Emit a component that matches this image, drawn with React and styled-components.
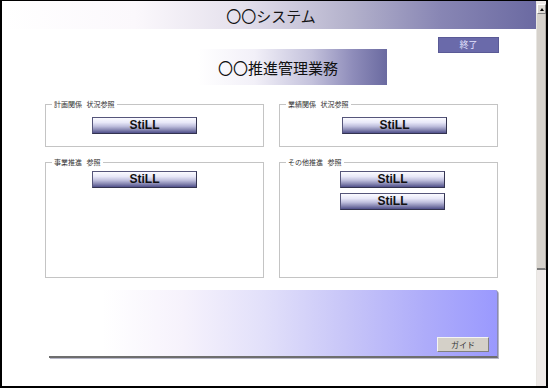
import React from "react";
import styled, { createGlobalStyle } from "styled-components";

const Global = createGlobalStyle`
  html, body { margin: 0; padding: 0; background: #fff; }
  * { box-sizing: border-box; }
`;

const Frame = styled.div`
  width: 548px;
  height: 388px;
  border-style: solid;
  border-color: #000;
  border-width: 1px 2px 2px 2px;
  display: flex;
  background: #fff;
  overflow: hidden;
  font-family: "Noto Sans CJK JP", "Liberation Sans", sans-serif;
`;

const Content = styled.div`
  flex: 1;
  display: flex;
  flex-direction: column;
  min-width: 0;
`;

const TitleBar = styled.div`
  height: 28px;
  display: flex;
  align-items: center;
  justify-content: center;
  padding-left: 4px;
  font-size: 15px;
  color: #151515;
  background: linear-gradient(
    to right,
    #ffffff 0%,
    #fbf8fc 25%,
    #e4e0ec 45%,
    #b4b2cc 65%,
    #8886b4 82%,
    #6b6aa2 100%
  );
`;

const Header = styled.div`
  margin-top: 8px;
  padding: 0 37px 0 196px;
  display: grid;
  grid-template-columns: 189px 1fr 61px;
  grid-template-rows: 12px 4px 32px;
`;

const ExitButton = styled.button`
  grid-column: 3;
  grid-row: 1 / span 2;
  border: 1px solid #5a5a96;
  background: #6a6aaa;
  color: #e4e4ff;
  font-family: "Noto Sans CJK JP", sans-serif;
  font-size: 9px;
  padding: 0;
  line-height: 14px;
`;

const Banner = styled.div`
  grid-column: 1;
  grid-row: 2 / span 2;
  display: flex;
  align-items: center;
  padding-left: 20px;
  font-size: 15px;
  color: #111;
  background: linear-gradient(
    to right,
    #ffffff 0%,
    #f2f0f8 30%,
    #c4c2dc 60%,
    #8e8cba 82%,
    #6a6aa0 100%
  );
`;

const Groups = styled.div`
  margin-top: 15px;
  padding-left: 43px;
  display: grid;
  grid-template-columns: 219px 219px;
  grid-template-rows: 47px 120px;
  column-gap: 15px;
  row-gap: 11px;
`;

const Group = styled.fieldset`
  margin: 0;
  padding: 0;
  border: 1px solid #c4c4c4;
  min-width: 0;
`;

const Legend = styled.legend`
  margin-left: 6px;
  padding: 0 2px;
  font-size: 7px;
  line-height: 9px;
  color: #333;
  word-spacing: 3px;
`;

const Stack = styled.div`
  display: flex;
  flex-direction: column;
  align-items: flex-start;
  gap: 5px;
  padding-left: ${(p) => p.$left}px;
  padding-top: ${(p) => p.$top}px;
`;

const StillButton = styled.button`
  width: 105px;
  height: 17px;
  padding: 0;
  border: 1px solid #55557a;
  border-right-color: #33334f;
  border-bottom-color: #33334f;
  background: linear-gradient(
    to bottom,
    #fbfbff 0%,
    #e8e8f8 30%,
    #c0c0de 55%,
    #8a8ab4 78%,
    #50508a 100%
  );
  font-family: "Liberation Sans", Arial, sans-serif;
  font-weight: bold;
  font-size: 12px;
  color: #111;
  line-height: 15px;
`;

const Panel = styled.div`
  margin: 12px 0 0 47px;
  width: 449px;
  height: 68px;
  border-bottom: 2px solid #6e6e6e;
  border-right: 1px solid #8a8ab0;
  border-top-right-radius: 3px;
  box-shadow: 1px 1px 0 #b8b8c8;
  background: linear-gradient(
    to right,
    #ffffff 0%,
    #ffffff 12%,
    #f6f2fc 30%,
    #e2e0fa 48%,
    #c8c6f8 66%,
    #aeacfa 84%,
    #9a99fe 100%
  );
  display: flex;
  align-items: flex-end;
  justify-content: flex-end;
  padding: 0 8px 4px 0;
`;

const GuideButton = styled.button`
  width: 52px;
  height: 15px;
  padding: 0;
  background: #d4d0c8;
  border: 1px solid;
  border-color: #f4f4f4 #808080 #808080 #f4f4f4;
  font-family: "Noto Sans CJK JP", sans-serif;
  font-size: 8px;
  line-height: 12px;
  color: #333;
`;

const Scrollbar = styled.div`
  width: 10px;
  display: flex;
  flex-direction: column;
  background: #eeeae8;
  border-left: 1px solid #e8e6e2;
`;

const ArrowBtn = styled.div`
  height: 10px;
  margin-top: 3px;
  background: #dedad4;
  border: 1px solid;
  border-color: #fff #808080 #808080 #fff;
  display: flex;
  align-items: center;
  justify-content: center;
`;

const Thumb = styled.div`
  height: 256px;
  background: #d6d2cc;
  border-bottom: 2px solid #7a7a7a;
  border-right: 1px solid #b0aca6;
`;

const groups = [
  { title: "計画関係 状況参照", left: 46, top: 8, buttons: 1 },
  { title: "業績関係 状況参照", left: 62, top: 8, buttons: 1 },
  { title: "事業推進 参照", left: 46, top: 4, buttons: 1 },
  { title: "その他推進 参照", left: 60, top: 4, buttons: 2 },
];

export default function App() {
  return (
    <>
      <Global />
      <Frame>
        <Content>
          <TitleBar>〇〇システム</TitleBar>
          <Header>
            <ExitButton>終了</ExitButton>
            <Banner>〇〇推進管理業務</Banner>
          </Header>
          <Groups>
            {groups.map((g) => (
              <Group key={g.title}>
                <Legend>{g.title}</Legend>
                <Stack $left={g.left} $top={g.top}>
                  {Array.from({ length: g.buttons }).map((_, i) => (
                    <StillButton key={i}>StiLL</StillButton>
                  ))}
                </Stack>
              </Group>
            ))}
          </Groups>
          <Panel>
            <GuideButton>ガイド</GuideButton>
          </Panel>
        </Content>
        <Scrollbar>
          <ArrowBtn>
            <svg width="4" height="3" viewBox="0 0 4 3">
              <path d="M0 3 L2 0 L4 3 Z" fill="#000" />
            </svg>
          </ArrowBtn>
          <Thumb />
        </Scrollbar>
      </Frame>
    </>
  );
}
